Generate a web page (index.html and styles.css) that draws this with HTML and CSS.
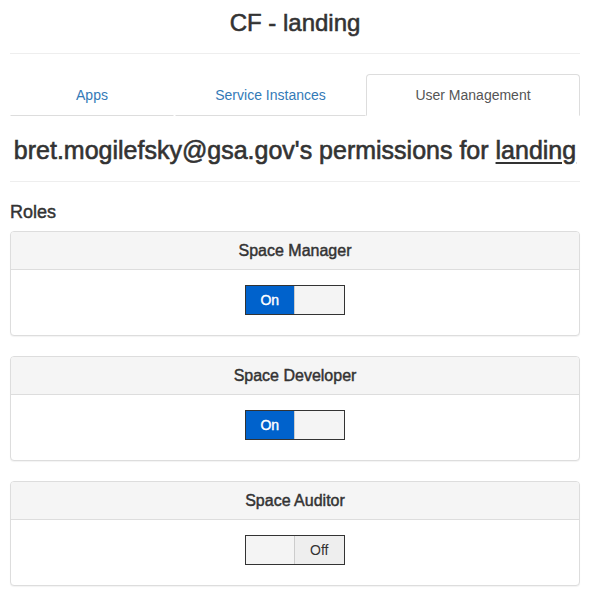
FILE: index.html
```html
<!DOCTYPE html>
<html lang="en">
<head>
<meta charset="utf-8">
<title>CF - landing</title>
<link rel="stylesheet" href="styles.css">
</head>
<body>
<div class="page">
  <header class="page-header">
    <h1 class="title">CF - landing</h1>
  </header>

  <ul class="tabs">
    <li class="tab tab-apps"><a href="#">Apps</a></li>
    <li class="tab tab-services"><a href="#">Service Instances</a></li>
    <li class="tab tab-users active"><a href="#">User Management</a></li>
  </ul>

  <div class="perm-header">
    <h2 class="perm-title">bret.mogilefsky@gsa.gov's permissions for <a href="#">landing</a></h2>
  </div>

  <h4 class="roles-title">Roles</h4>

  <div class="panel">
    <div class="panel-heading"><h3 class="panel-title">Space Manager</h3></div>
    <div class="panel-body">
      <div class="toggle">
        <span class="half on">On</span>
        <span class="half blank right"></span>
      </div>
    </div>
  </div>

  <div class="panel">
    <div class="panel-heading"><h3 class="panel-title">Space Developer</h3></div>
    <div class="panel-body">
      <div class="toggle">
        <span class="half on">On</span>
        <span class="half blank right"></span>
      </div>
    </div>
  </div>

  <div class="panel">
    <div class="panel-heading"><h3 class="panel-title">Space Auditor</h3></div>
    <div class="panel-body">
      <div class="toggle">
        <span class="half blank"></span>
        <span class="half off right">Off</span>
      </div>
    </div>
  </div>
</div>
</body>
</html>
```
FILE: styles.css
```css
* { box-sizing: border-box; }

html, body {
  margin: 0;
  padding: 0;
  background: #fff;
}

body {
  font-family: "Liberation Sans", Arial, Helvetica, sans-serif;
  font-size: 14px;
  line-height: 20px;
  color: #333;
}

.page {
  width: 570px;
  margin-left: 10px;
}

.page-header {
  padding: 9px 0 17px;
  border-bottom: 1px solid #eee;
}

.title {
  margin: 0;
  text-align: center;
  font-size: 24px;
  line-height: 27px;
  font-weight: normal;
  -webkit-text-stroke: 0.55px #333;
}

.tabs {
  list-style: none;
  margin: 20px 0 0;
  padding: 0;
  display: flex;
}

.tab a {
  display: block;
  text-align: center;
  padding: 10px 0;
  line-height: 20px;
  font-size: 14px;
  color: #337ab7;
  text-decoration: none;
  border: 1px solid transparent;
  border-bottom-color: #ddd;
  border-radius: 4px 4px 0 0;
}

.tab-apps { width: 164px; margin-right: 1px; }
.tab-services { width: 191px; }
.tab-users { flex: 1; }

.tab.active a {
  color: #555;
  border-color: #ddd;
  border-bottom-color: transparent;
}

.perm-header {
  padding: 19px 0 16px;
  border-bottom: 1px solid #eee;
}

.perm-title {
  margin: 0;
  text-align: center;
  font-size: 25px;
  line-height: 30px;
  font-weight: normal;
  -webkit-text-stroke: 0.6px #333;
  white-space: nowrap;
}

.perm-title a {
  color: #333;
  text-decoration: underline;
  text-underline-offset: 3px;
}

.roles-title {
  margin: 20px 0 9px;
  font-size: 18px;
  line-height: 20px;
  font-weight: normal;
  -webkit-text-stroke: 0.45px #333;
}

.panel {
  border: 1px solid #ddd;
  border-radius: 4px;
  box-shadow: 0 1px 1px rgba(0, 0, 0, 0.05);
  margin-bottom: 20px;
  background: #fff;
}

.panel-heading {
  background: #f5f5f5;
  border-bottom: 1px solid #ddd;
  border-radius: 3px 3px 0 0;
  padding: 9px 15px 8px;
}

.panel-title {
  margin: 0;
  text-align: center;
  font-size: 16px;
  line-height: 20px;
  font-weight: normal;
  -webkit-text-stroke: 0.45px #333;
}

.panel-body {
  padding: 15px 15px 20px;
  display: flex;
  justify-content: center;
}

.toggle {
  display: flex;
  width: 100px;
  height: 30px;
  border: 1px solid #333;
  margin-left: -1px;
}

.half {
  flex: 1;
  display: flex;
  align-items: center;
  justify-content: center;
  font-size: 14px;
}

.half.right {
  border-left: 1px solid #ccc;
}

.half.on {
  background: #0062cc;
  color: #fff;
  -webkit-text-stroke: 0.4px #fff;
}

.half.blank {
  background: #f4f4f4;
}

.half.off {
  background: #eee;
  color: #333;
}
```
